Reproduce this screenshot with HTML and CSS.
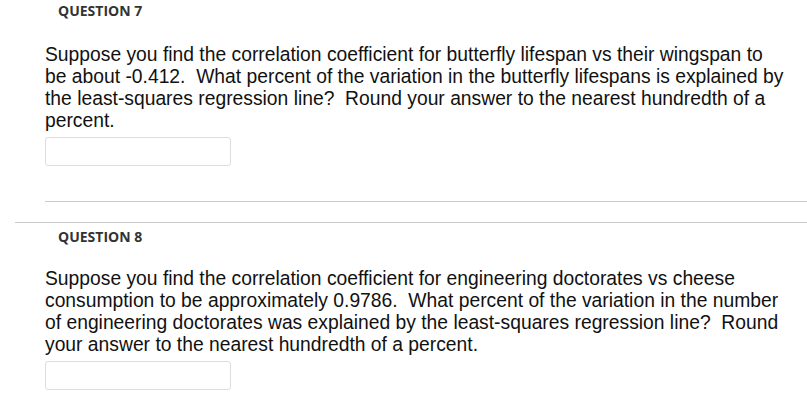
FILE: index.html
```html
<!DOCTYPE html>
<html>
<head>
<meta charset="utf-8">
<link rel="stylesheet" href="styles.css">
</head>
<body>
<div class="page">
  <div class="question">
    <div class="q-head">QUESTION 7</div>
    <div class="q-body">
      <p class="q-text">Suppose you find the correlation coefficient for butterfly lifespan vs their wingspan to be about -0.412.&nbsp; What percent of the variation in the butterfly lifespans is explained by the least-squares regression line?&nbsp; Round your answer to the nearest hundredth of a percent.</p>
      <div class="answer"><input class="answer-input" type="text"></div>
    </div>
  </div>
  <div class="question q-sep">
    <div class="q-head">QUESTION 8</div>
    <div class="q-body">
      <p class="q-text">Suppose you find the correlation coefficient for engineering doctorates vs cheese consumption to be approximately 0.9786.&nbsp; What percent of the variation in the number of engineering doctorates was explained by the least-squares regression line?&nbsp; Round your answer to the nearest hundredth of a percent.</p>
      <div class="answer last"><input class="answer-input" type="text"></div>
    </div>
  </div>
</div>
</body>
</html>
```
FILE: styles.css
```css
html, body { margin: 0; padding: 0; background: #fff; }
.page { padding-left: 15px; width: 792px; }
.q-head {
  font-family: "Open Sans", sans-serif;
  font-weight: 700;
  font-size: 14px;
  line-height: 18px;
  color: #333;
  padding: 2px 0 0 43px;
}
.q-body {
  margin-left: 30px;
  padding-top: 24px;
  border-bottom: 1px solid #ccc;
}
.q-text {
  margin: 0;
  font-family: "Liberation Sans", Arial, sans-serif;
  font-size: 19.3px;
  line-height: 22px;
  color: #111;
  width: 740px;
}
.answer { padding: 5px 0 35px; }
.answer-input {
  display: block;
  box-sizing: border-box;
  width: 186px;
  height: 29px;
  border: 1px solid #ddd;
  border-radius: 3px;
  margin: 0;
  padding: 0;
}
.q-sep { border-top: 1px solid #ccc; margin-top: 20px; }
.q-sep .q-body { border-bottom: none; padding-top: 22px; }
.q-sep .q-head { padding-top: 5px; }
.answer.last { padding-bottom: 20px; }
```
